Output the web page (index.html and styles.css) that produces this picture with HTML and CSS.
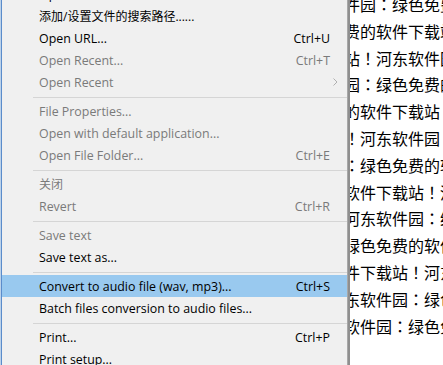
FILE: index.html
```html
<!DOCTYPE html>
<html lang="zh-CN">
<head>
<meta charset="utf-8">
<title>Menu</title>
<link rel="stylesheet" href="styles.css">
</head>
<body>
<div class="doc">
  <div class="line">件园<span class="p" lang="ja">：</span>绿色免费</div>
  <div class="line">费的软件下载站</div>
  <div class="line">站<span class="p" lang="ja">！</span>河东软件园</div>
  <div class="line">园<span class="p" lang="ja">：</span>绿色免费的</div>
  <div class="line">的软件下载站<span class="p" lang="ja">！</span></div>
  <div class="line"><span class="p" lang="ja">！</span>河东软件园<span class="p" lang="ja">：</span></div>
  <div class="line"><span class="p" lang="ja">：</span>绿色免费的软</div>
  <div class="line">软件下载站<span class="p" lang="ja">！</span>河</div>
  <div class="line">河东软件园<span class="p" lang="ja">：</span>绿</div>
  <div class="line">绿色免费的软件</div>
  <div class="line">件下载站<span class="p" lang="ja">！</span>河东</div>
  <div class="line">东软件园<span class="p" lang="ja">：</span>绿色</div>
  <div class="line">软件园<span class="p" lang="ja">：</span>绿色免</div>
</div>
<div class="menu">
  <div class="item"><span class="label">Open...</span></div>
  <div class="item"><span class="label cjk">添加/设置文件的搜索路径......</span></div>
  <div class="item"><span class="label">Open URL...</span><span class="sc">Ctrl+U</span></div>
  <div class="item off"><span class="label">Open Recent...</span><span class="sc">Ctrl+T</span></div>
  <div class="item off"><span class="label">Open Recent</span><svg class="arrow" width="5" height="8" viewBox="0 0 5 8"><path d="M0.5 0.5 L4 4 L0.5 7.5" fill="none" stroke="#b0b0b0" stroke-width="1"/></svg></div>
  <div class="sep"></div>
  <div class="item off"><span class="label">File Properties...</span></div>
  <div class="item off"><span class="label">Open with default application...</span></div>
  <div class="item off"><span class="label">Open File Folder...</span><span class="sc">Ctrl+E</span></div>
  <div class="sep"></div>
  <div class="item off"><span class="label cjk">关闭</span></div>
  <div class="item off"><span class="label">Revert</span><span class="sc">Ctrl+R</span></div>
  <div class="sep"></div>
  <div class="item off"><span class="label">Save text</span></div>
  <div class="item"><span class="label">Save text as...</span></div>
  <div class="sep"></div>
  <div class="item hl"><span class="label">Convert to audio file (wav, mp3)...</span><span class="sc">Ctrl+S</span></div>
  <div class="item"><span class="label">Batch files conversion to audio files...</span></div>
  <div class="sep"></div>
  <div class="item"><span class="label">Print...</span><span class="sc">Ctrl+P</span></div>
  <div class="item"><span class="label">Print setup...</span></div>
</div>
</body>
</html>
```
FILE: styles.css
```css
html, body {
  margin: 0;
  padding: 0;
  overflow: hidden;
  background: #ffffff;
}

.doc {
  margin: -9px 0 0 344px;
  font-family: "Noto Sans CJK SC", sans-serif;
  font-size: 16px;
  line-height: 26.8px;
  color: #000;
  white-space: nowrap;
}

.p {
  font-family: "Noto Sans CJK JP", "Noto Sans CJK SC", sans-serif;
}

.menu {
  position: absolute;
  left: 0;
  top: -17px;
  width: 346px;
  background: #f0f0f0;
  border-left: 1px solid #bcd2ea;
  border-right: 1px solid #a8a8a8;
  box-shadow: inset 1px 0 0 #5b8ccb, 2px 0 0 #8f8f8f;
  font-family: "Open Sans", "Noto Sans CJK SC", sans-serif;
  font-size: 12.4px;
  color: #000;
}

.item {
  display: flex;
  align-items: center;
  height: 22px;
  padding: 0 17px 0 37px;
  margin-left: 1px;
}

.cjk {
  font-size: 12px;
}

.item.off {
  color: #7a7a7a;
}

.item.hl {
  background: #99c9ef;
}

.sc {
  margin-left: auto;
}

.arrow {
  margin-left: auto;
  margin-right: -8px;
}

.sep {
  height: 1px;
  margin: 4px 0 2px 32px;
  background: #d5d5d5;
}
```
